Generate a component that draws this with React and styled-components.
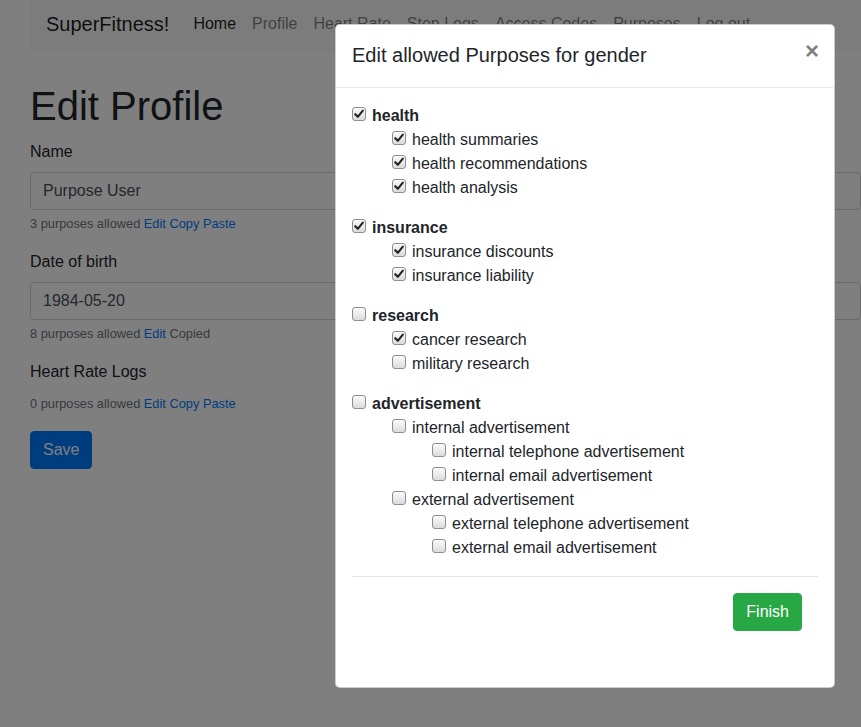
import React from 'react'
import styled, { createGlobalStyle } from 'styled-components'

const GlobalStyle = createGlobalStyle`
  html, body {
    margin: 0;
    padding: 0;
    background: #fff;
    overflow: hidden;
  }
  body {
    font-family: "Liberation Sans", Arial, sans-serif;
    font-size: 16px;
    line-height: 1.5;
    color: #212529;
  }
  * { box-sizing: border-box; }
`

const purposes = [
  {
    name: 'health', checked: true, children: [
      { name: 'health summaries', checked: true },
      { name: 'health recommendations', checked: true },
      { name: 'health analysis', checked: true },
    ]
  },
  {
    name: 'insurance', checked: true, children: [
      { name: 'insurance discounts', checked: true },
      { name: 'insurance liability', checked: true },
    ]
  },
  {
    name: 'research', checked: false, children: [
      { name: 'cancer research', checked: true },
      { name: 'military research', checked: false },
    ]
  },
  {
    name: 'advertisement', checked: false, children: [
      {
        name: 'internal advertisement', checked: false, children: [
          { name: 'internal telephone advertisement', checked: false },
          { name: 'internal email advertisement', checked: false },
        ]
      },
      {
        name: 'external advertisement', checked: false, children: [
          { name: 'external telephone advertisement', checked: false },
          { name: 'external email advertisement', checked: false },
        ]
      },
    ]
  },
]

const navLinks = ['Profile', 'Heart Rate', 'Step Logs', 'Access Codes', 'Purposes', 'Log out']

const Check = ({ checked }) => (
  <Box>
    {checked && (
      <svg width="12" height="12" viewBox="0 0 12 12">
        <path d="M2.2 6.2 L4.8 8.8 L9.8 2.6" fill="none" stroke="#222" strokeWidth="2.1" strokeLinecap="round" strokeLinejoin="round" />
      </svg>
    )}
  </Box>
)

const PurposeItem = ({ item, top }) => (
  <Item top={top}>
    <ItemRow>
      <Check checked={item.checked} />
      <ItemLabel bold={top}>{item.name}</ItemLabel>
    </ItemRow>
    {item.children && (
      <Children>
        {item.children.map(c => <PurposeItem key={c.name} item={c} />)}
      </Children>
    )}
  </Item>
)

const App = () => {
  return (
    <Page>
      <GlobalStyle />
      <Container>
        <NavBar>
          <Brand>SuperFitness!</Brand>
          <NavList>
            <NavLink active>Home</NavLink>
            {navLinks.map(l => <NavLink key={l}>{l}</NavLink>)}
          </NavList>
        </NavBar>

        <Title>Edit Profile</Title>

        <FormGroup>
          <Label>Name</Label>
          <Input defaultValue="Purpose User" />
          <Help>3 purposes allowed <A>Edit</A> <A>Copy</A> <A>Paste</A></Help>
        </FormGroup>
        <FormGroup>
          <Label>Date of birth</Label>
          <Input defaultValue="1984-05-20" />
          <Help>8 purposes allowed <A>Edit</A> Copied</Help>
        </FormGroup>
        <FormGroup>
          <Label>Heart Rate Logs</Label>
          <Help spaced>0 purposes allowed <A>Edit</A> <A>Copy</A> <A>Paste</A></Help>
        </FormGroup>
        <Button variant="primary">Save</Button>
      </Container>

      <Backdrop />
      <Modal>
        <ModalHeader>
          <ModalTitle>Edit allowed Purposes for gender</ModalTitle>
          <Close>×</Close>
        </ModalHeader>
        <ModalBody>
          {purposes.map(p => <PurposeItem key={p.name} item={p} top />)}
          <Rule />
          <Footer>
            <Button variant="success">Finish</Button>
          </Footer>
        </ModalBody>
      </Modal>
    </Page>
  )
}

const Page = styled.div`
  position: relative;
  width: 861px;
  height: 727px;
  overflow: hidden;
`

const Container = styled.div`
  padding: 0 0 0 30px;
`

const NavBar = styled.nav`
  display: flex;
  align-items: center;
  height: 52px;
  padding: 4px 16px 8px;
  background: #f8f9fa;
`

const Brand = styled.span`
  font-size: 20px;
  line-height: 30px;
  padding: 5px 0;
  margin-right: 16px;
  color: rgba(0, 0, 0, 0.9);
`

const NavList = styled.div`
  display: flex;
`

const NavLink = styled.span`
  padding: 8px;
  color: ${p => p.active ? 'rgba(0,0,0,0.9)' : 'rgba(0,0,0,0.5)'};
  white-space: nowrap;
`

const Title = styled.h1`
  font-size: 40px;
  font-weight: 500;
  line-height: 1.2;
  margin: 30px 0 10px;
`

const FormGroup = styled.div`
  margin-bottom: 17px;
`

const Label = styled.label`
  display: block;
  margin-bottom: 8px;
`

const Input = styled.input`
  display: block;
  width: 100%;
  height: 38px;
  margin-top: 2px;
  padding: 6px 12px;
  font: inherit;
  color: #495057;
  border: 1px solid #ced4da;
  border-radius: 4px;
  background: #fff;
`

const Help = styled.small`
  display: block;
  margin-top: ${p => p.spaced ? '10px' : '4px'};
  font-size: 12.8px;
  color: #6c757d;
`

const A = styled.a`
  color: #007bff;
`

const Button = styled.button`
  font: inherit;
  color: #fff;
  background: ${p => p.variant === 'success' ? '#28a745' : '#007bff'};
  border: 1px solid ${p => p.variant === 'success' ? '#28a745' : '#007bff'};
  border-radius: 4px;
  padding: 6px 12px;
  line-height: 24px;
`

const Backdrop = styled.div`
  position: absolute;
  inset: 0;
  background: rgba(0, 0, 0, 0.5);
`

const Modal = styled.div`
  position: absolute;
  left: 335px;
  top: 24px;
  width: 500px;
  background: #fff;
  border: 1px solid rgba(0, 0, 0, 0.2);
  border-radius: 5px;
`

const ModalHeader = styled.div`
  display: flex;
  justify-content: space-between;
  align-items: flex-start;
  padding: 16px;
  border-bottom: 1px solid #e9ecef;
`

const ModalTitle = styled.h5`
  margin: -1px 0 1px;
  font-size: 20px;
  font-weight: 500;
  line-height: 30px;
`

const Close = styled.span`
  font-size: 24px;
  font-weight: 700;
  line-height: 1;
  color: #000;
  opacity: 0.5;
  margin: -2px -1px 0 0;
`

const ModalBody = styled.div`
  padding: 16px;
`

const Item = styled.div`
  margin-bottom: ${p => p.top ? '16px' : '0'};
  &:nth-last-of-type(1) { margin-bottom: 0; }
`

const ItemRow = styled.div`
  display: flex;
  align-items: center;
  height: 24px;
`

const Box = styled.span`
  display: inline-flex;
  align-items: center;
  justify-content: center;
  width: 14px;
  height: 14px;
  margin: -4px 6px 0 0;
  border: 1px solid #8f8f8f;
  border-radius: 3px;
  background: linear-gradient(#fafafa, #dcdcdc);
`

const ItemLabel = styled.span`
  font-weight: ${p => p.bold ? 700 : 400};
`

const Children = styled.div`
  padding-left: 40px;
`

const Rule = styled.hr`
  margin: 16px 0;
  border: 0;
  border-top: 1px solid rgba(0, 0, 0, 0.1);
`

const Footer = styled.div`
  display: flex;
  justify-content: flex-end;
  padding: 0 16px 40px;
`

export default App
